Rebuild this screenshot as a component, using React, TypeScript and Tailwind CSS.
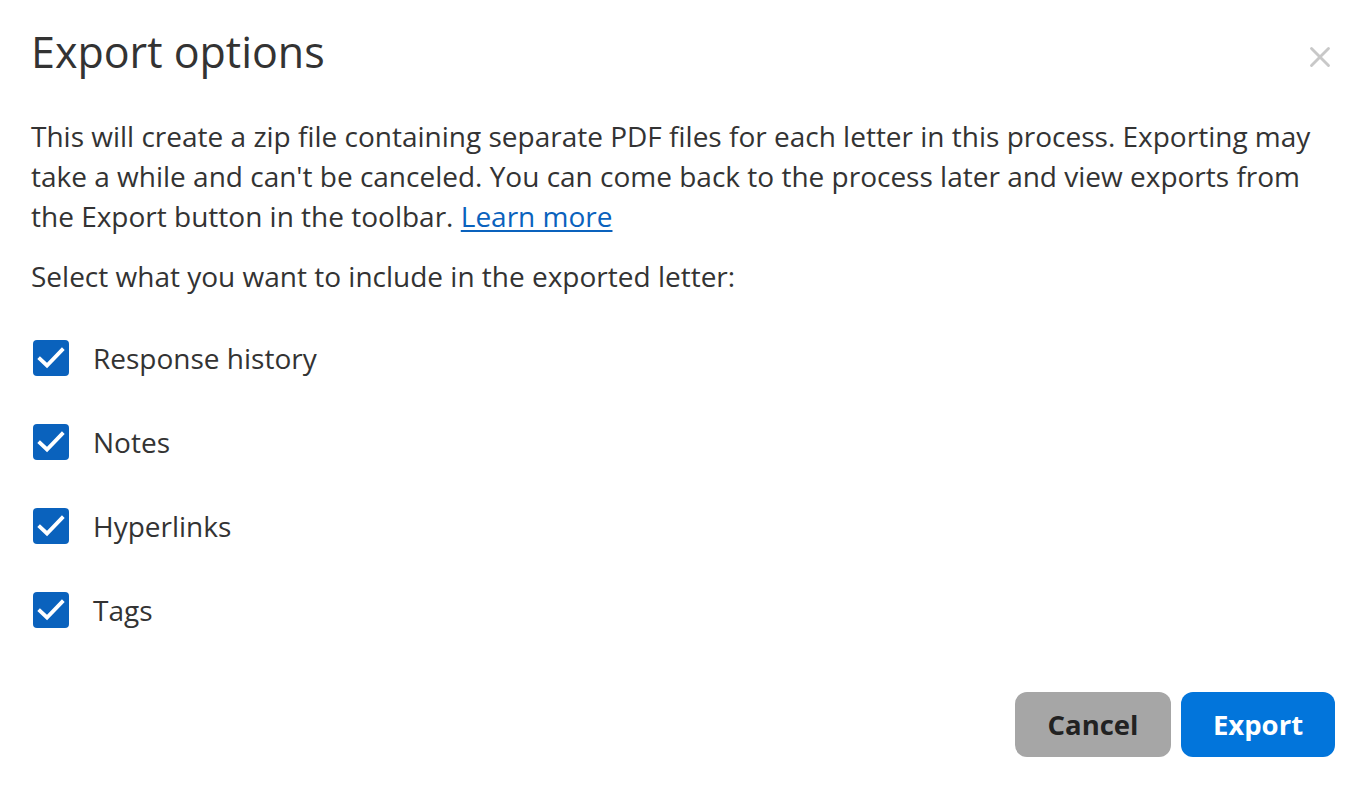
import { X } from 'lucide-react';

const options = ['Response history', 'Notes', 'Hyperlinks', 'Tags'];

function Checkbox() {
  return (
    <span className="flex h-9 w-9 flex-shrink-0 items-center justify-center rounded-[4px] bg-[#0a62bd]">
      <svg viewBox="0 0 36 36" className="h-9 w-9" fill="none" stroke="#fff" strokeWidth="3.8" strokeLinecap="square" strokeLinejoin="miter">
        <path d="M7 19l7 6.5L29 10" />
      </svg>
    </span>
  );
}

export default function App() {
  return (
    <div className="h-[796px] w-[1366px] bg-white text-[#333] font-['Open_Sans',sans-serif]">
      <div className="px-[31px] pt-[24px]">
        {/* Header */}
        <div className="flex items-start justify-between">
          <h2 className="text-[43px] leading-[56px] text-[#333]">Export options</h2>
          <button className="mr-[-2px] mt-[16px] text-[#c8c8c8]">
            <X className="h-[34px] w-[34px]" strokeWidth={2} />
          </button>
        </div>

        {/* Description */}
        <p className="mt-[36px] text-[28px] leading-[40px]">
          This will create a zip file containing separate PDF files for each letter in this process. Exporting may take a while and can't be canceled. You can come back to the process later and view exports from the Export button in the toolbar.{' '}
          <a href="#" className="text-[#0a62bd] underline underline-offset-[3px]">Learn more</a>
        </p>

        <p className="mt-[20px] text-[28px] leading-[40px]">Select what you want to include in the exported letter:</p>

        {/* Options */}
        <div className="mt-[44px] flex flex-col gap-[48px] pl-[2px]">
          {options.map((o) => (
            <label key={o} className="flex items-center gap-[24px] text-[28px] leading-[36px]">
              <Checkbox />
              <span>{o}</span>
            </label>
          ))}
        </div>

        {/* Footer */}
        <div className="mt-[64px] flex justify-end gap-[10px] pr-[0px]">
          <button className="h-[65px] w-[156px] rounded-[12px] bg-[#a6a6a6] text-[27.5px] font-bold text-[#222]">Cancel</button>
          <button className="h-[65px] w-[154px] rounded-[12px] bg-[#0275db] text-[27.5px] font-bold text-white">Export</button>
        </div>
      </div>
    </div>
  );
}
